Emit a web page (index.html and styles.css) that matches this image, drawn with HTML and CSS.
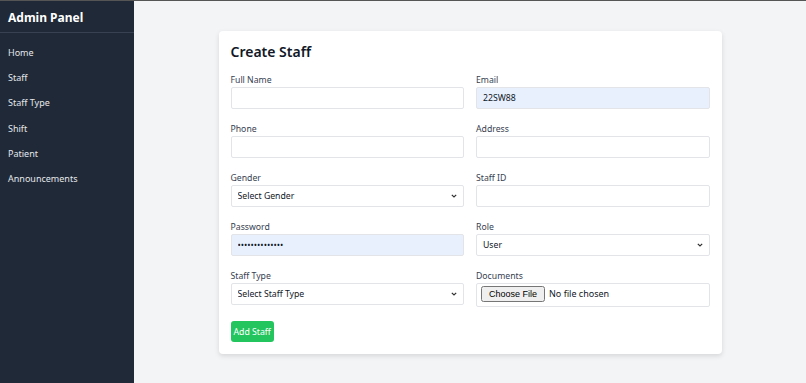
FILE: index.html
```html
<!DOCTYPE html>
<html lang="en">
<head>
    <meta charset="UTF-8">
    <title>Create Staff</title>
    <link rel="stylesheet" href="styles.css">
</head>
<body>
    <div class="layout">
        <aside class="sidebar">
            <div class="brand">Admin Panel</div>
            <nav class="nav">
                <a href="#">Home</a>
                <a href="#">Staff</a>
                <a href="#">Staff Type</a>
                <a href="#">Shift</a>
                <a href="#">Patient</a>
                <a href="#">Announcements</a>
            </nav>
        </aside>
        <main class="main">
            <form class="card">
                <h2>Create Staff</h2>
                <div class="grid">
                    <div class="field">
                        <label>Full Name</label>
                        <input type="text">
                    </div>
                    <div class="field">
                        <label>Email</label>
                        <input type="text" class="autofill" value="22SW88">
                    </div>
                    <div class="field">
                        <label>Phone</label>
                        <input type="text">
                    </div>
                    <div class="field">
                        <label>Address</label>
                        <input type="text">
                    </div>
                    <div class="field">
                        <label>Gender</label>
                        <select>
                            <option>Select Gender</option>
                            <option>Male</option>
                            <option>Female</option>
                        </select>
                    </div>
                    <div class="field">
                        <label>Staff ID</label>
                        <input type="text">
                    </div>
                    <div class="field">
                        <label>Password</label>
                        <input type="password" class="autofill" value="12345678901234">
                    </div>
                    <div class="field">
                        <label>Role</label>
                        <select>
                            <option>User</option>
                            <option>Admin</option>
                        </select>
                    </div>
                    <div class="field">
                        <label>Staff Type</label>
                        <select>
                            <option>Select Staff Type</option>
                        </select>
                    </div>
                    <div class="field">
                        <label>Documents</label>
                        <input type="file" class="file">
                    </div>
                </div>
                <button type="button" class="btn">Add Staff</button>
            </form>
        </main>
    </div>
</body>
</html>
```

FILE: styles.css
```css
* {
    box-sizing: border-box;
}
body {
    margin: 0;
    font-family: "Noto Sans", "Open Sans", sans-serif;
    border-top: 1px solid #555;
    background: #f3f4f6;
}
.layout {
    display: flex;
    min-height: 382px;
}
.sidebar {
    width: 134px;
    background: #1f2937;
    color: #fff;
}
.brand {
    height: 32px;
    padding: 8px 8px 0;
    font-size: 12px;
    font-weight: 700;
    border-bottom: 1px solid #374151;
}
.nav {
    display: flex;
    flex-direction: column;
    padding-top: 7px;
}
.nav a {
    height: 25.2px;
    line-height: 26px;
    padding: 0 8px;
    font-size: 9px;
    color: #e5e7eb;
    text-decoration: none;
}
.main {
    flex: 1;
    padding-top: 30px;
}
.card {
    width: 503px;
    margin: 0 auto;
    background: #fff;
    border-radius: 4px;
    padding: 12px 12px 12px;
    box-shadow: 0 2px 5px rgba(0, 0, 0, 0.12);
}
.card h2 {
    margin: 0 0 12px;
    font-size: 14px;
    line-height: 18px;
    font-weight: 600;
    color: #111827;
}
.grid {
    display: grid;
    grid-template-columns: 1fr 1fr;
    column-gap: 12px;
    row-gap: 13px;
}
.field label {
    display: block;
    font-size: 8.7px;
    line-height: 12px;
    padding-top: 1px;
    color: #374151;
    margin-bottom: 1px;
}
.field input,
.field select {
    display: block;
    width: 100%;
    height: 22px;
    border: 1px solid #e2e4e8;
    border-radius: 2px;
    padding: 0 6px;
    font-family: inherit;
    font-size: 8.7px;
    color: #111827;
    background: #fff;
}
.field select {
    appearance: none;
    background: #fff url("data:image/svg+xml,%3Csvg xmlns='http://www.w3.org/2000/svg' width='6' height='4' viewBox='0 0 6 4'%3E%3Cpath d='M0.8 0.8 L3 3 L5.2 0.8' fill='none' stroke='%23333' stroke-width='1.2'/%3E%3C/svg%3E") no-repeat right 6px center;
}
.field input.autofill {
    background: #e8f0fe;
}
.field input.file {
    height: 24px;
    padding: 2px 4px;
    font-size: 9px;
}
.btn {
    display: block;
    margin-top: 14px;
    height: 21px;
    padding: 0 3px;
    background: #22c55e;
    color: #fff;
    border: 0;
    border-radius: 3px;
    font-family: inherit;
    font-size: 8.7px;
}
```
